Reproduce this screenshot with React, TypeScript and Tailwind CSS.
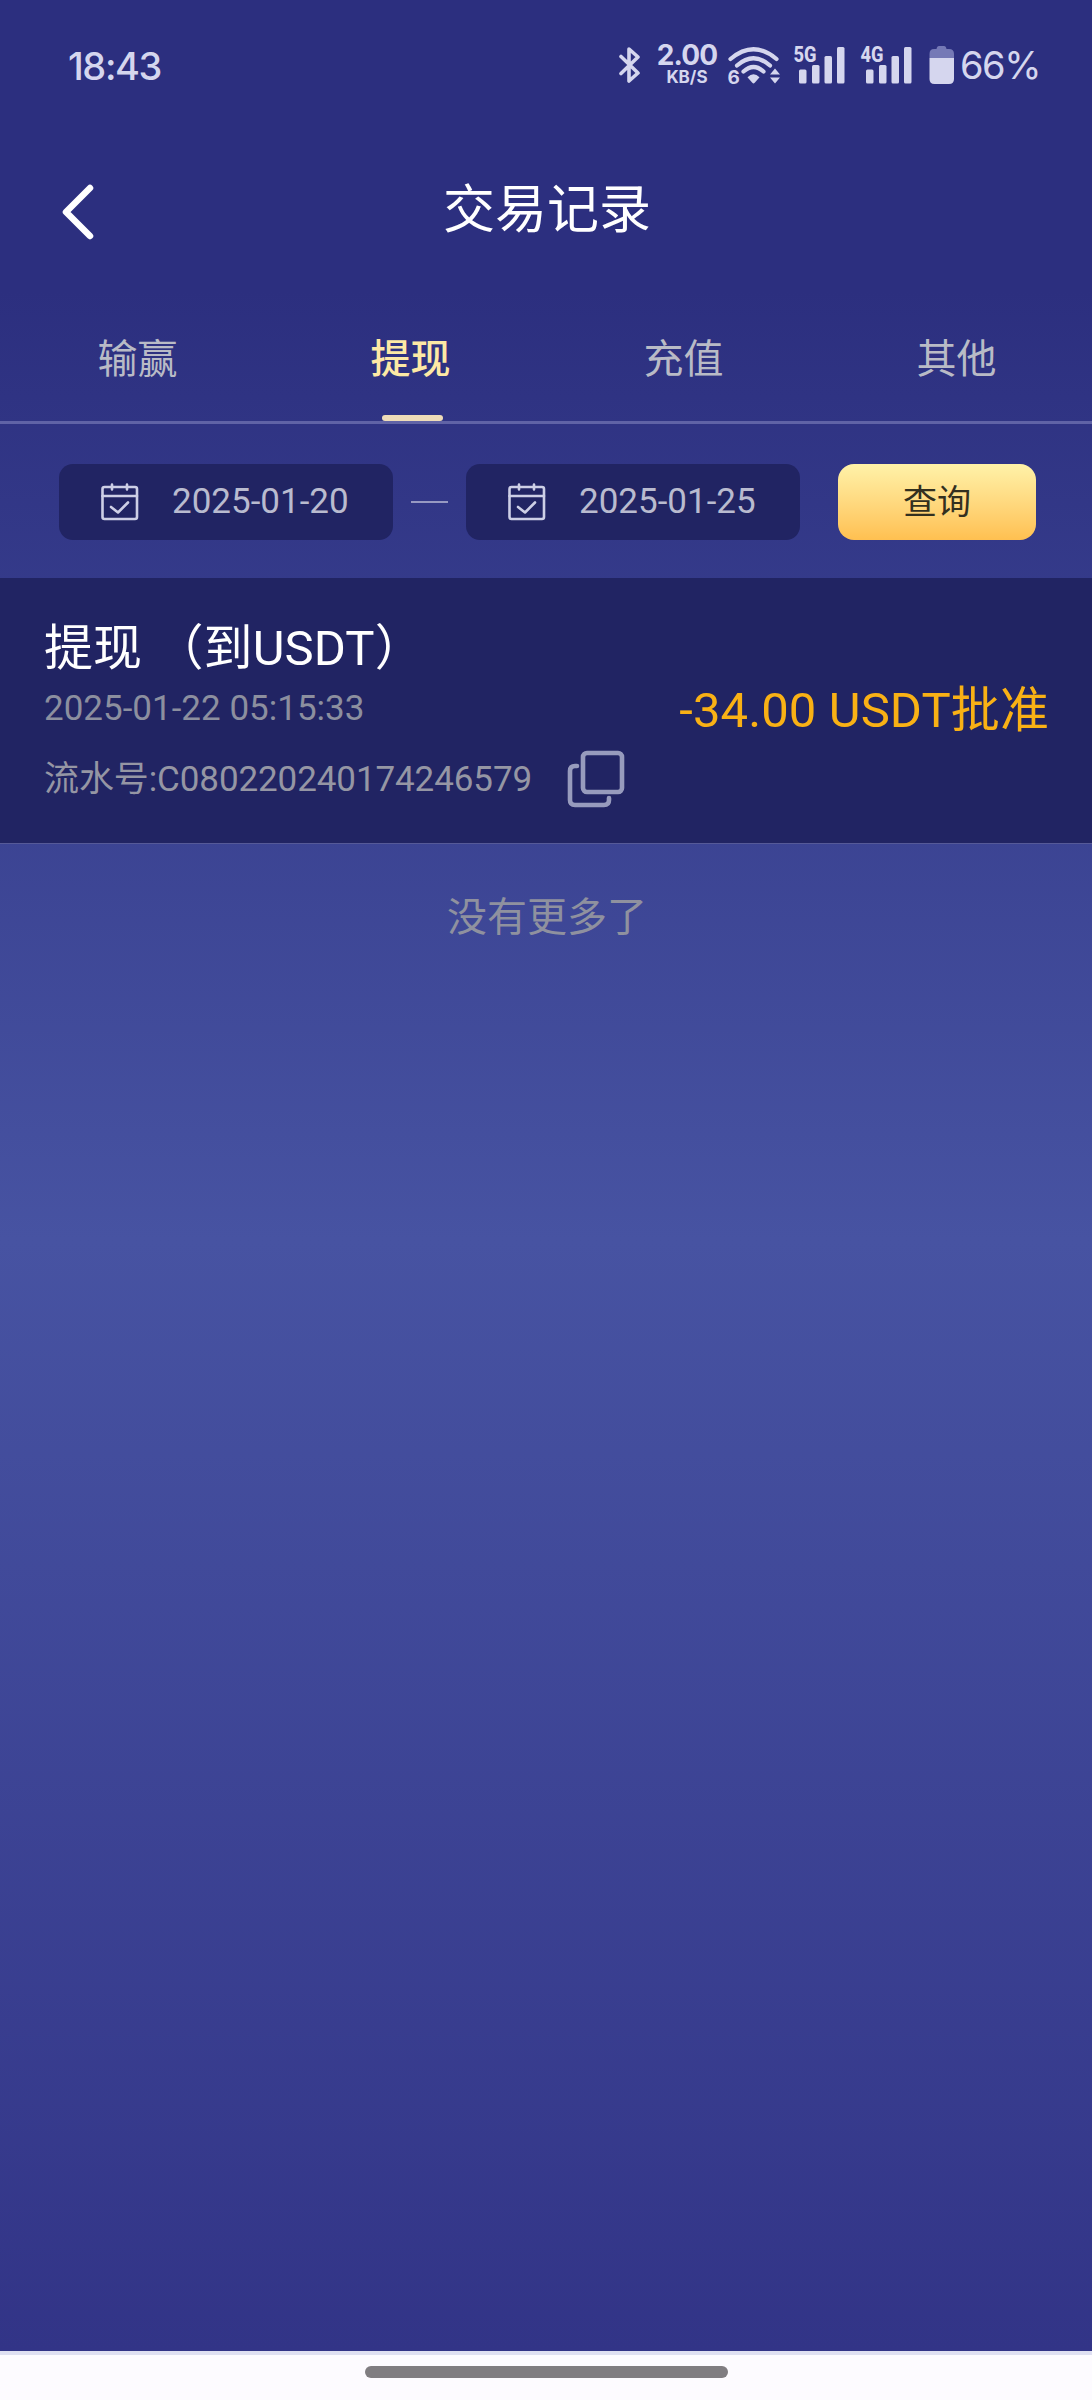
import { FC, useState } from "react";

const tabs = ["输赢", "提现", "充值", "其他"];

const records = [
  {
    title: "提现 （到USDT）",
    time: "2025-01-22 05:15:33",
    serial: "C080220240174246579",
    amount: "-34.00 USDT",
    status: "批准",
  },
];

const SignalBars: FC<{ label: string }> = ({ label }) => (
  <svg className="overflow-visible" width="54" height="40" viewBox="0 0 54 40" fill="currentColor">
    <text x="0.5" y="17" fontFamily="Roboto" fontWeight="800" fontSize="22" textLength="23" lengthAdjust="spacingAndGlyphs">
      {label}
    </text>
    <rect x="6" y="24.5" width="7.5" height="14" rx="1.5" />
    <rect x="19" y="20" width="7.5" height="18.5" rx="1.5" />
    <rect x="31.5" y="11" width="7.5" height="27.5" rx="1.5" />
    <rect x="44" y="2" width="7.5" height="36.5" rx="1.5" />
  </svg>
);

const StatusBar: FC = () => (
  <div className="flex h-[130px] items-center justify-between pr-[54px] pl-[68px] font-['Inter',sans-serif] text-[#d5d6ee]">
    <span className="pt-[2px] text-[38px] leading-[48px] font-medium tracking-[-1.4px] whitespace-nowrap">18:43</span>
    <div className="flex items-center">
      {/* Bluetooth */}
      <svg className="ml-px" width="22" height="40" viewBox="0 0 22 40" fill="none" stroke="currentColor" strokeWidth="3.6" strokeLinejoin="round" strokeLinecap="round">
        <path d="M2 11.5 L19 28 L10 36 V4 L19 12 L2 28.5" />
      </svg>
      {/* Network speed */}
      <div className="ml-[15px] flex h-10 w-[62px] flex-col items-center">
        <span className="-mt-[4px] text-[28px] leading-[28px] font-bold tracking-[-0.9px]">2.00</span>
        <span className="text-[17px] leading-[17px] font-bold">KB/S</span>
      </div>
      {/* Wi-Fi 6 */}
      <svg className="ml-[9px] overflow-visible" width="53" height="40" viewBox="0 0 53 40" fill="currentColor">
        <g fill="none" stroke="currentColor" strokeWidth="4.2" strokeLinecap="round">
          <path d="M3.500 14 Q26.500 -5.500 49.500 14" />
          <path d="M10 20.500 Q26.500 6 43 20.500" />
          <path d="M16.500 26.500 Q26.500 17.500 36.500 26.500" />
        </g>
        <path d="M20.500 32.200 Q26.500 26.500 32.500 32.200 L27.700 37.800 Q26.500 39 25.300 37.800 Z" />
        <text x="0.5" y="38.5" fontFamily="Inter" fontWeight="700" fontSize="19">6</text>
        <path d="M48 23.500 L53 29.500 H43 Z M48 38.500 L53 32.500 H43 Z" />
      </svg>
      <div className="ml-[13px] flex gap-[13px]">
        <SignalBars label="5G" />
        <SignalBars label="4G" />
      </div>
      {/* Battery */}
      <svg className="ml-[15px]" width="26" height="40" viewBox="0 0 26 40" fill="currentColor">
        <path className="text-[#7579b6]" d="M7.5 4 Q8 1 10 1 H15 Q17 1 17.5 4 H20 Q25 4 25 9 V13 H0.500 V9 Q0.500 4 5 4 Z" />
        <path d="M0.500 13 H25 V34 Q25 39 20 39 H5.500 Q0.500 39 0.500 34 Z" />
      </svg>
      <span className="ml-[5px] w-[78px] text-[38px] leading-[48px] tracking-[-1.5px] whitespace-nowrap">66%</span>
    </div>
  </div>
);

const CalendarIcon: FC = () => (
  <svg width="38" height="38" viewBox="0 0 38 38" fill="none" stroke="#cdcfe6" strokeWidth="2.600" strokeLinecap="round" strokeLinejoin="round">
    <rect x="1.500" y="4" width="34.500" height="32" rx="2" />
    <path d="M1.500 13 H36 M11 1.500 V6.500 M26 1.500 V6.500 M10 24 L17 29.500 L27 19.500" />
  </svg>
);

const CopyIcon: FC = () => (
  <svg width="58" height="58" viewBox="0 0 58 58" fill="none" stroke="#979bbd" strokeWidth="4.600" strokeLinecap="round">
    <rect x="16" y="3" width="39" height="39" rx="4" />
    <path d="M10 16 H8 Q3 16 3 21 V50 Q3 55 8 55 H37 Q42 55 42 50 V48" />
  </svg>
);

const DateField: FC<{ value: string }> = ({ value }) => (
  <button type="button" className="flex h-[76px] w-[334px] shrink-0 items-center rounded-[14px] bg-[#212463] pl-[42px]">
    <CalendarIcon />
    <span className="ml-[33px] pb-[2px] text-[35px] leading-none whitespace-nowrap text-[#b9bbcf]">{value}</span>
  </button>
);

export default function App() {
  const [activeTab, setActiveTab] = useState("提现");

  return (
    <div className="flex h-[2400px] w-[1092px] flex-col overflow-hidden bg-[linear-gradient(180deg,#2c2f7f_0px,#2c2f7f_290px,#4753a2_1240px,#323487_2351px)] font-['Roboto','Noto_Sans_CJK_SC',sans-serif]">
      <StatusBar />

      {/* Title bar */}
      <header className="grid h-[156px] grid-cols-[120px_1fr_118px] items-center">
        <button type="button" aria-label="返回" className="pt-[8px] pl-[60px]">
          <svg width="36" height="58" viewBox="0 0 36 58" fill="none" stroke="#fff" strokeWidth="6.500" strokeLinecap="round" strokeLinejoin="round">
            <path d="M30 5 L6 29 L30 53" />
          </svg>
        </button>
        <h1 className="pt-[5px] text-center text-[52px] leading-none text-white">交易记录</h1>
      </header>

      {/* Tabs */}
      <nav className="grid h-[138px] grid-cols-4 border-b-[3px] border-[#6063a6]">
        {tabs.map((tab) => (
          <button
            key={tab}
            type="button"
            onClick={() => setActiveTab(tab)}
            className={`relative pt-[12px] pl-[2px] text-[40px] leading-none ${
              tab === activeTab ? "font-medium text-[#fde9a5]" : "text-[#b9bbc6]"
            }`}
          >
            {tab}
            {tab === activeTab && (
              <span className="absolute bottom-0 left-[109px] h-[6px] w-[61px] rounded-[3px] bg-[#eedcb8]" />
            )}
          </button>
        ))}
      </nav>

      {/* Date range filter */}
      <div className="flex h-[154px] items-start pt-[40px] pl-[59px]">
        <DateField value="2025-01-20" />
        <span className="mr-[18px] ml-[18px] mt-[37px] h-[2px] w-[37px] bg-[#9799c2]" />
        <DateField value="2025-01-25" />
        <button
          type="button"
          className="ml-[38px] h-[76px] w-[198px] rounded-[16px] bg-linear-to-b from-[#fff2a8] to-[#ffc050] text-[34px] leading-none text-[#33301f]"
        >
          查询
        </button>
      </div>

      {/* Records */}
      {records.map((record) => (
        <div key={record.serial} className="flex h-[266px] items-start justify-between border-b border-[#565a98] bg-[#212463] pr-[43px] pl-[44px]">
          <div>
            <h2 className="mt-[41px] text-[49px] leading-[60px] tracking-[0.1px] whitespace-nowrap text-white">{record.title}</h2>
            <p className="mt-[10px] text-[35px] leading-[40px] whitespace-nowrap text-[#8c8f9f]">{record.time}</p>
            <div className="mt-[20px] flex h-[60px] items-center">
              <p className="w-[488px] pt-[2px] text-[35px] leading-[44px] tracking-[-0.1px] whitespace-nowrap text-[#9596a4]">
                流水号:{record.serial}
              </p>
              <button type="button" aria-label="复制" className="ml-[35px]">
                <CopyIcon />
              </button>
            </div>
          </div>
          <p className="mt-[103px] text-[49px] leading-[60px] tracking-[0.1px] whitespace-nowrap text-[#f9b115]">
            {record.amount}
            {record.status}
          </p>
        </div>
      ))}

      <p className="mt-[54px] pl-[2px] text-center text-[40px] leading-[40px] text-[#8f919f]">没有更多了</p>

      {/* Gesture bar */}
      <footer className="mt-auto h-[49px] border-t-[4px] border-[#dfe0f2] bg-[#fdfbff] pt-[11px]">
        <div className="mx-auto h-[12px] w-[363px] rounded-full bg-[#807d81]" />
      </footer>
    </div>
  );
}
